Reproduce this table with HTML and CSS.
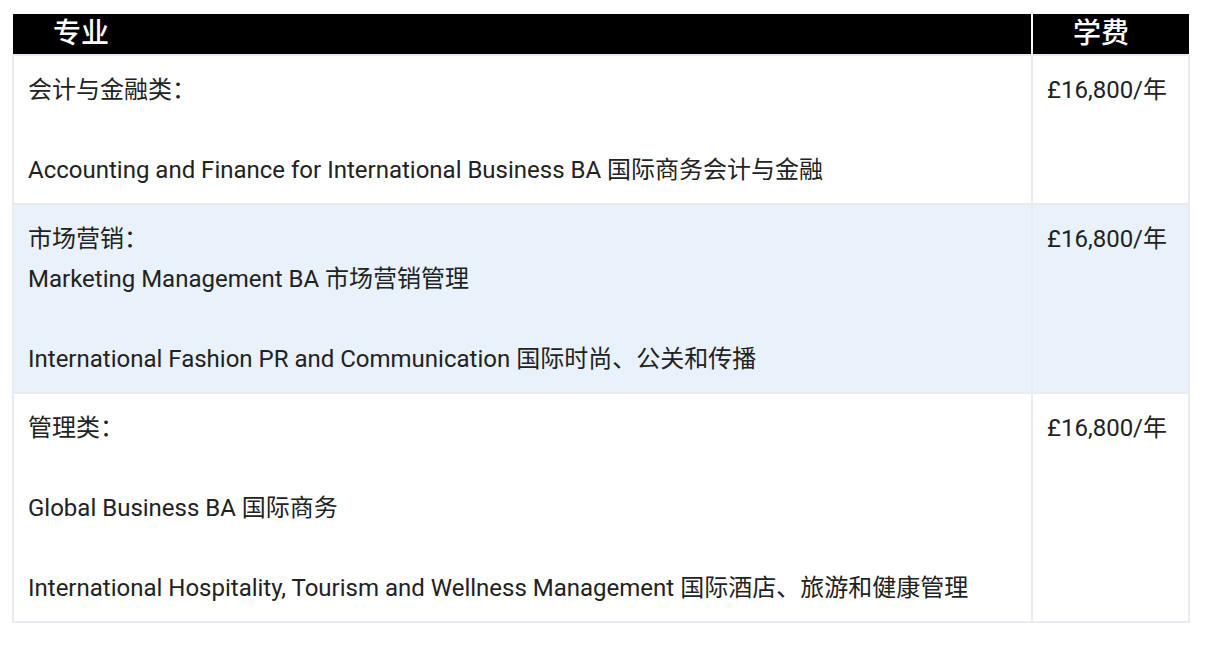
FILE: index.html
```html
<!DOCTYPE html>
<html lang="zh-CN">
<head>
    <meta charset="UTF-8">
    <meta name="viewport" content="width=device-width, initial-scale=1.0">
    <title>专业与学费</title>
    <link rel="stylesheet" href="styles.css">
</head>
<body>
    <table class="fee-table">
        <thead>
            <tr>
                <th class="col-major">专业</th>
                <th class="col-fee">学费</th>
            </tr>
        </thead>
        <tbody>
            <tr>
                <td>会计与金融类：<br><br>Accounting and Finance for International Business BA 国际商务会计与金融</td>
                <td>£16,800/年</td>
            </tr>
            <tr class="alt">
                <td>市场营销：<br>Marketing Management BA 市场营销管理<br><br>International Fashion PR and Communication 国际时尚、公关和传播</td>
                <td>£16,800/年</td>
            </tr>
            <tr>
                <td>管理类：<br><br>Global Business BA 国际商务<br><br>International Hospitality, Tourism and Wellness Management 国际酒店、旅游和健康管理</td>
                <td>£16,800/年</td>
            </tr>
        </tbody>
    </table>
</body>
</html>
```

FILE: styles.css
```css
body {
    margin: 14px 12px;
    background: #fff;
    font-family: Roboto, "Noto Sans CJK SC", sans-serif;
    color: #222;
}
.fee-table {
    width: 1178px;
    border-collapse: collapse;
}
.fee-table th {
    background-color: #000;
    color: #fff;
    font-size: 28px;
    font-weight: 500;
    text-align: left;
    height: 40px;
    padding: 0 0 0 40px;
    line-height: 40px;
}
.fee-table th.col-fee {
    border-left: 2px solid #fff;
    width: 116px;
}
.fee-table td {
    font-size: 24px;
    line-height: 40px;
    padding: 14px 14px 13px;
    vertical-align: top;
    border: 2px solid #e8ecf0;
}
.fee-table tr.alt td {
    background-color: #e9f1fb;
}
```
